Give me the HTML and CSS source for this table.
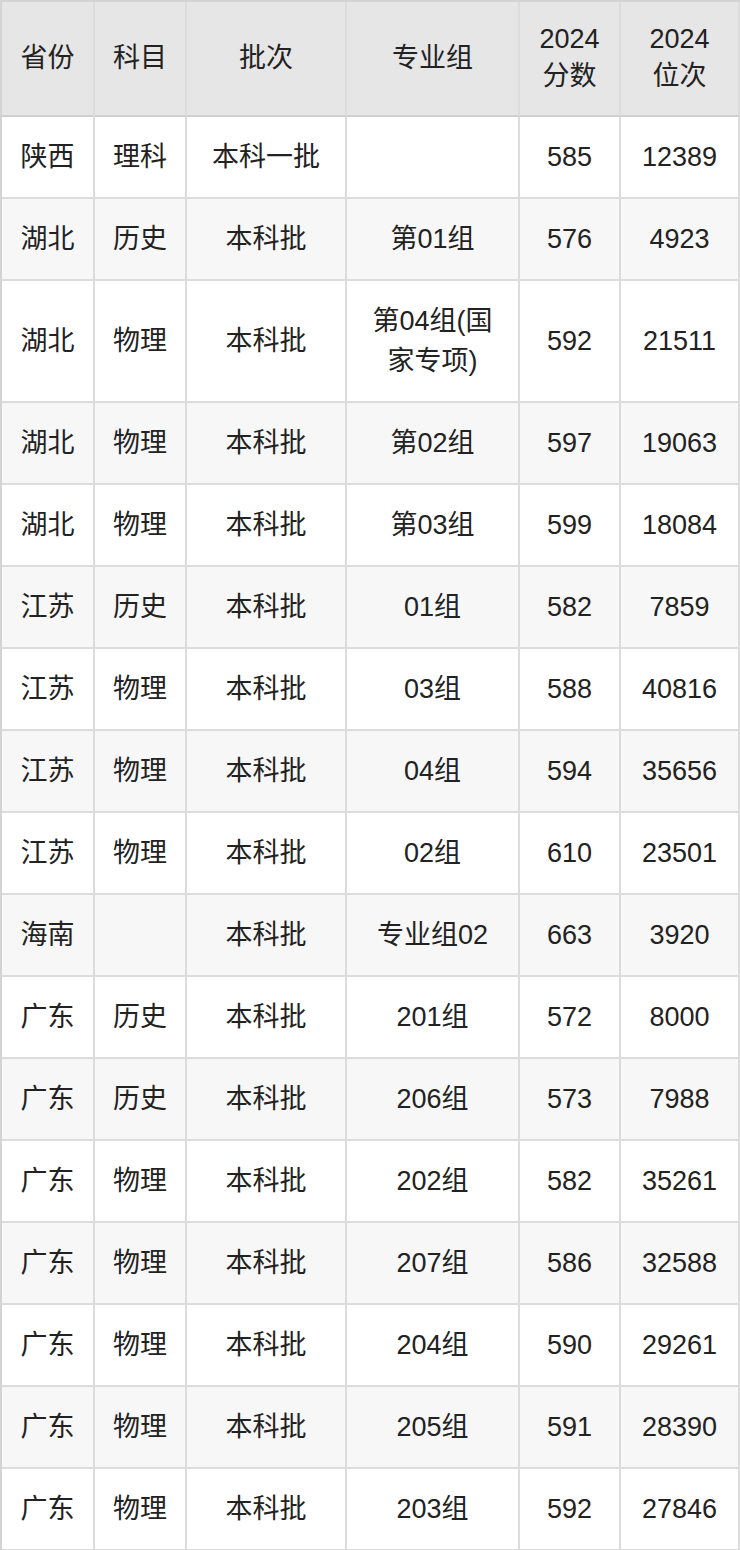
FILE: index.html
```html
<!DOCTYPE html>
<html lang="zh-CN">
<head>
<meta charset="utf-8">
<link rel="stylesheet" href="styles.css">
</head>
<body>
<table class="score-table">
  <colgroup>
    <col class="c1"><col class="c2"><col class="c3"><col class="c4"><col class="c5"><col class="c6">
  </colgroup>
  <thead>
    <tr><th>省份</th><th>科目</th><th>批次</th><th>专业组</th><th>2024<br>分数</th><th>2024<br>位次</th></tr>
  </thead>
  <tbody>
    <tr><td>陕西</td><td>理科</td><td>本科一批</td><td></td><td>585</td><td>12389</td></tr>
    <tr><td>湖北</td><td>历史</td><td>本科批</td><td>第01组</td><td>576</td><td>4923</td></tr>
    <tr><td>湖北</td><td>物理</td><td>本科批</td><td>第04组(国家专项)</td><td>592</td><td>21511</td></tr>
    <tr><td>湖北</td><td>物理</td><td>本科批</td><td>第02组</td><td>597</td><td>19063</td></tr>
    <tr><td>湖北</td><td>物理</td><td>本科批</td><td>第03组</td><td>599</td><td>18084</td></tr>
    <tr><td>江苏</td><td>历史</td><td>本科批</td><td>01组</td><td>582</td><td>7859</td></tr>
    <tr><td>江苏</td><td>物理</td><td>本科批</td><td>03组</td><td>588</td><td>40816</td></tr>
    <tr><td>江苏</td><td>物理</td><td>本科批</td><td>04组</td><td>594</td><td>35656</td></tr>
    <tr><td>江苏</td><td>物理</td><td>本科批</td><td>02组</td><td>610</td><td>23501</td></tr>
    <tr><td>海南</td><td></td><td>本科批</td><td>专业组02</td><td>663</td><td>3920</td></tr>
    <tr><td>广东</td><td>历史</td><td>本科批</td><td>201组</td><td>572</td><td>8000</td></tr>
    <tr><td>广东</td><td>历史</td><td>本科批</td><td>206组</td><td>573</td><td>7988</td></tr>
    <tr><td>广东</td><td>物理</td><td>本科批</td><td>202组</td><td>582</td><td>35261</td></tr>
    <tr><td>广东</td><td>物理</td><td>本科批</td><td>207组</td><td>586</td><td>32588</td></tr>
    <tr><td>广东</td><td>物理</td><td>本科批</td><td>204组</td><td>590</td><td>29261</td></tr>
    <tr><td>广东</td><td>物理</td><td>本科批</td><td>205组</td><td>591</td><td>28390</td></tr>
    <tr><td>广东</td><td>物理</td><td>本科批</td><td>203组</td><td>592</td><td>27846</td></tr>
  </tbody>
</table>
</body>
</html>
```

FILE: styles.css
```css
html, body {
  margin: 0;
  padding: 0;
  background: #ffffff;
}

.score-table {
  width: 740px;
  table-layout: fixed;
  border-collapse: separate;
  border-spacing: 0;
  border-top: 2px solid #d4d4d4;
  border-left: 2px solid #d4d4d4;
  font-family: "Liberation Sans", "Noto Sans CJK SC", sans-serif;
  font-size: 27px;
  color: #222222;
}

.c1 { width: 93px; }
.c2 { width: 92px; }
.c3 { width: 160px; }
.c4 { width: 173px; }
.c5 { width: 101px; }
.c6 { width: 119px; }

.score-table th,
.score-table td {
  border-right: 2px solid #dcdcdc;
  border-bottom: 2px solid #dcdcdc;
  text-align: center;
  vertical-align: middle;
  font-weight: normal;
  padding: 20px 16px;
  line-height: 40px;
}

.score-table th {
  background: #e6e6e6;
  padding: 19px 8px 20px;
  line-height: 37px;
  border-bottom-color: #d0d0d0;
}

.score-table tbody tr:nth-child(even) td {
  background: #f7f7f7;
}
```
